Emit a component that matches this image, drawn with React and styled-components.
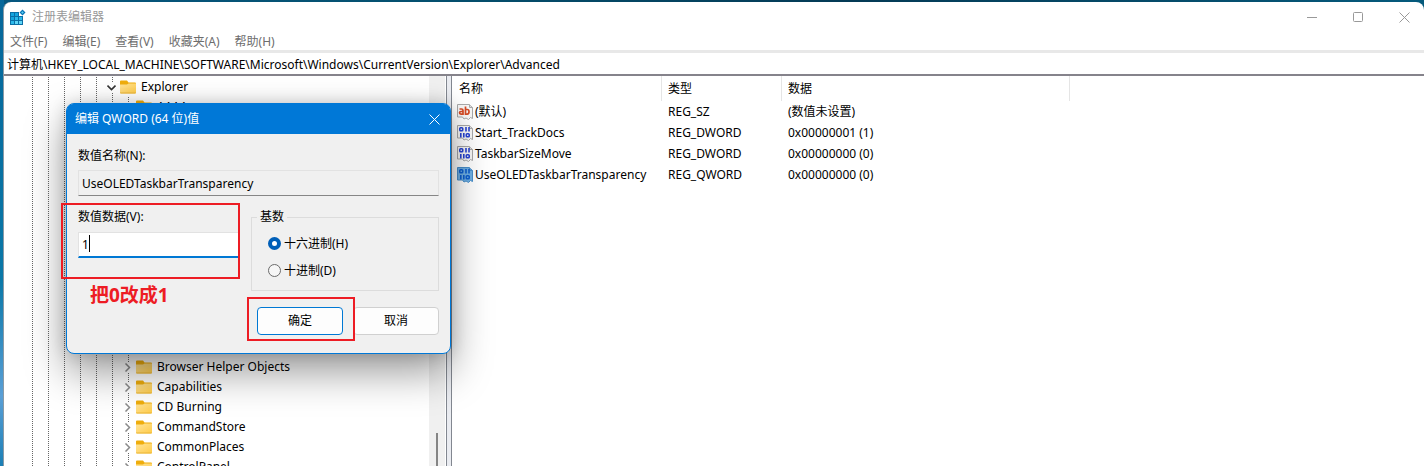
import React from 'react';
import styled, { createGlobalStyle, css } from 'styled-components';

const GlobalStyle = createGlobalStyle`
  * { box-sizing: border-box; }
  html, body { margin: 0; height: 100%; overflow: hidden; }
  body {
    font-family: "Noto Sans", "Noto Sans CJK SC", sans-serif;
    font-size: 12px;
    line-height: 20px;
    color: #000;
  }
  #root { height: 100%; }
  button, input { font: inherit; color: inherit; }
  svg { flex: none; }
`;

const menus = ['文件(F)', '编辑(E)', '查看(V)', '收藏夹(A)', '帮助(H)'];

const subKeys = [
  'Browser Helper Objects',
  'Capabilities',
  'CD Burning',
  'CommandStore',
  'CommonPlaces',
  'ControlPanel',
];

const values = [
  { name: '(默认)', type: 'REG_SZ', data: '(数值未设置)', kind: 'string' },
  { name: 'Start_TrackDocs', type: 'REG_DWORD', data: '0x00000001 (1)', kind: 'binary' },
  { name: 'TaskbarSizeMove', type: 'REG_DWORD', data: '0x00000000 (0)', kind: 'binary' },
  { name: 'UseOLEDTaskbarTransparency', type: 'REG_QWORD', data: '0x00000000 (0)', kind: 'binary', selected: true },
];

const AppIcon = () => (
  <svg width="16" height="16" viewBox="0 0 16 16">
    <path d="M0 3h9v4h4v9H0z" fill="#0b6fa6" />
    <path d="M1 4h3v3H1zM5 4h3v3H5zM1 8h3v3H1z" fill="#16a5df" />
    <path d="M5 8h3v3H5zM9 8h3v3H9zM1 12h3v3H1z" fill="#2cb9ea" />
    <path d="M5 12h3v3H5zM9 12h3v3H9z" fill="#5fd5f6" />
    <path d="M12.500 0.500 15.500 3.500 12.500 6.500 9.500 3.500z" fill="#0a75b5" />
    <path d="M12.500 2.200 13.800 3.500 12.500 4.800 11.200 3.500z" fill="#59d0f5" />
  </svg>
);

const FolderIcon = () => (
  <svg width="16" height="14" viewBox="0 0 16 14">
    <defs>
      <linearGradient id="folder" x1="0" y1="0" x2="1" y2="1">
        <stop offset="0" stopColor="#ffe49a" />
        <stop offset="1" stopColor="#ffcb47" />
      </linearGradient>
    </defs>
    <path d="M0 1.500Q0 0.500 1 0.500h6L8.500 2.500H15q1 0 1 1V6H0z" fill="#efad0c" />
    <path d="M0 4.500h7L8.500 3.500H16V12.500q0 1-1 1H1q-1 0-1-1z" fill="url(#folder)" />
    <path d="M0 12.500h16q0 1-1 1H1q-1 0-1-1z" fill="#e9b53a" />
  </svg>
);

const Chevron = ({ open }) => (
  <svg width="9" height="9" viewBox="0 0 9 9" fill="none">
    {open
      ? <path d="M0.500 2.500 4.500 6.500 8.500 2.500" stroke="#333" strokeWidth="1.600" />
      : <path d="M2.500 0.500 6.500 4.500 2.500 8.500" stroke="#8a8a8a" strokeWidth="1.500" />}
  </svg>
);

const ValueIcon = ({ kind, selected }) => (
  <svg width="16" height="16" viewBox="0 0 16 16">
    <path
      d="M0.500 0.500h11.500l3.500 3v11l-2-1-2 2-2.500-1.500-2 1-1.500-2H0.500z"
      fill={selected ? '#6fb1e6' : '#f8f8f8'}
      stroke={selected ? '#4a90cc' : '#a9a9a9'}
    />
    <path d="M12.500 0.500v3h3" fill="none" stroke={selected ? '#4a90cc' : '#a9a9a9'} />
    {kind === 'string' ? (
      <g fill="none" stroke="#d64a24" strokeWidth="1.700">
        <path d="M2.500 5h2q1.500 0 1.500 1.500V11M6 7.500H4Q2.500 7.500 2.500 8.800T4 10.100h2" />
        <path d="M8.500 2.500V11M8.500 5.500h1.800q1.700 0 1.700 2.300t-1.700 2.300H8.500" />
      </g>
    ) : (
      <g fill="none" stroke={selected ? '#0d5fd0' : '#2743d4'} strokeWidth="1.600">
        <rect x="2.800" y="2.800" width="2.900" height="2.900" rx="0.800" />
        <path d="M9 2v4.500M12 2v4.500M3.800 8v4.500M6.800 8v4.500" />
        <rect x="9.300" y="8.800" width="2.900" height="2.900" rx="0.800" />
      </g>
    )}
  </svg>
);

const CloseGlyph = () => (
  <svg width="11" height="11" viewBox="0 0 11 11" fill="none" stroke="currentColor">
    <path d="M0.500 0.500 10.500 10.500M10.500 0.500 0.500 10.500" />
  </svg>
);

const TreeRow = ({ name, open, level }) => (
  <TreeItem $level={level}>
    <Chevron open={open} />
    <FolderIcon />
    <span>{name}</span>
  </TreeItem>
);

const EditDialog = () => {
  const [value, setValue] = React.useState('1');
  const [base, setBase] = React.useState('hex');

  return (
    <Dialog role="dialog" aria-labelledby="dialog-title">
      <DialogTitle>
        <span id="dialog-title">编辑 QWORD (64 位)值</span>
        <DialogClose aria-label="关闭"><CloseGlyph /></DialogClose>
      </DialogTitle>
      <DialogBody>
        <Field>
          <label htmlFor="value-name">数值名称(N):</label>
          <NameInput id="value-name" readOnly value="UseOLEDTaskbarTransparency" />
        </Field>
        <Columns>
          <Field>
            <label htmlFor="value-data">数值数据(V):</label>
            <DataBox>
              <DataInput id="value-data" value={value} onChange={(e) => setValue(e.target.value)} />
              <Caret />
            </DataBox>
          </Field>
          <BaseGroup>
            <legend>基数</legend>
            <RadioLabel>
              <Radio name="base" checked={base === 'hex'} onChange={() => setBase('hex')} />
              十六进制(H)
            </RadioLabel>
            <RadioLabel>
              <Radio name="base" checked={base === 'dec'} onChange={() => setBase('dec')} />
              十进制(D)
            </RadioLabel>
          </BaseGroup>
        </Columns>
        <Actions>
          <PushButton $primary>确定</PushButton>
          <PushButton>取消</PushButton>
        </Actions>
      </DialogBody>
      <Mark $left={-6} $top={99} $width={179} $height={76} />
      <Mark $left={180} $top={193} $width={108} $height={44} />
      <Note>把0改成1</Note>
    </Dialog>
  );
};

const App = () => (
  <Desktop>
    <GlobalStyle />
    <Window>
      <TitleBar>
        <AppIcon />
        <Title>注册表编辑器</Title>
        <WindowButton aria-label="最小化">
          <svg width="11" height="11" stroke="currentColor"><path d="M0 5.500h10" /></svg>
        </WindowButton>
        <WindowButton aria-label="最大化">
          <svg width="11" height="11" stroke="currentColor" fill="none">
            <rect x="0.500" y="0.500" width="9" height="9" rx="1" />
          </svg>
        </WindowButton>
        <WindowButton aria-label="关闭"><CloseGlyph /></WindowButton>
      </TitleBar>
      <MenuBar>
        {menus.map((menu) => <MenuButton key={menu}>{menu}</MenuButton>)}
      </MenuBar>
      <AddressInput
        aria-label="地址"
        defaultValue="计算机\HKEY_LOCAL_MACHINE\SOFTWARE\Microsoft\Windows\CurrentVersion\Explorer\Advanced"
      />
      <Panes>
        <TreePane>
          <Guides>
            {[0, 1, 2, 3, 4, 5, 6].map((i) => <Guide key={i} $short={i === 6} />)}
          </Guides>
          <Tree>
            <TreeRow name="Explorer" open level={0} />
            <TreeRow name="AAAA" level={1} />
            <SubKeys>
              {subKeys.map((name) => <TreeRow key={name} name={name} level={1} />)}
            </SubKeys>
          </Tree>
          <ScrollTrack><ScrollThumb /></ScrollTrack>
        </TreePane>
        <Splitter />
        <ListPane>
          <ValueTable>
            <thead>
              <tr>
                <HeadCell $width={210}>名称</HeadCell>
                <HeadCell $width={120}>类型</HeadCell>
                <HeadCell $width={288}>数据</HeadCell>
              </tr>
            </thead>
            <tbody>
              {values.map((item) => (
                <tr key={item.name}>
                  <Cell>
                    <ValueName>
                      <ValueIcon kind={item.kind} selected={item.selected} />
                      {item.name}
                    </ValueName>
                  </Cell>
                  <Cell>{item.type}</Cell>
                  <Cell>{item.data}</Cell>
                </tr>
              ))}
            </tbody>
          </ValueTable>
        </ListPane>
      </Panes>
    </Window>
    <EditDialog />
  </Desktop>
);

const Desktop = styled.div`
  position: relative;
  display: flex;
  height: 100%;
  padding: 2px 0 0 3px;
  background:
    linear-gradient(#06679a, #0a78a8 60%, #5a9fd6 85%, #1b7fb5) 0 0 / 4px 100% no-repeat,
    linear-gradient(90deg, #06577f 0, #04506f 30%, #043a55 60%, #055a7c 100%);
`;

const Window = styled.div`
  flex: 1;
  min-width: 0;
  display: flex;
  flex-direction: column;
  border-left: 1px solid #8a9aa5;
  border-radius: 8px 8px 0 0;
  background: #fff;
  overflow: hidden;
`;

const TitleBar = styled.header`
  display: flex;
  align-items: center;
  height: 30px;
  padding-left: 6px;
  color: #999;
`;

const Title = styled.span`
  flex: 1;
  padding-left: 6px;
`;

const WindowButton = styled.button`
  width: 46px;
  height: 28px;
  padding: 0;
  border: none;
  background: transparent;
  display: grid;
  place-items: center;

  &:last-child {
    width: 43px;
    padding-left: 3px;
  }
`;

const MenuBar = styled.nav`
  display: flex;
  gap: 15px;
  height: 18px;
  padding-left: 6px;
`;

const MenuButton = styled.button`
  padding: 0;
  border: none;
  background: transparent;
  color: #6d6d6d;
  line-height: 20px;
`;

const AddressInput = styled.input`
  height: 26px;
  flex: none;
  padding: 0 3px;
  border: solid #e8e8e8;
  border-width: 3px 0 2px;
  border-bottom-color: #85838b;
  outline: none;
  background: #fff;
`;

const Panes = styled.div`
  flex: 1;
  min-height: 0;
  display: flex;
`;

const TreePane = styled.div`
  position: relative;
  flex: none;
  width: 442px;
  display: flex;
  padding-right: 1px;
  overflow: hidden;
`;

const Guides = styled.div`
  position: absolute;
  inset: 1px auto 0 28px;
  display: flex;
  gap: 15px;
`;

const Guide = styled.div`
  width: 1px;
  margin-top: ${(p) => (p.$short ? 20 : 0)}px;
  background: repeating-linear-gradient(#666 0 1px, transparent 1px 2px);
`;

const Tree = styled.div`
  flex: 1;
  position: relative;
  padding-top: 1px;
`;

const SubKeys = styled.div`
  padding-top: 240px;
`;

const TreeItem = styled.div`
  display: flex;
  align-items: center;
  height: 20px;
  padding-left: ${(p) => 103 + p.$level * 16}px;
  white-space: nowrap;

  svg:first-child {
    background: #fff;
    margin-right: 4px;
  }
  span { padding-left: 5px; }
`;

const ScrollTrack = styled.div`
  width: 16px;
  display: flex;
  justify-content: center;
  align-items: flex-end;
  background: #f0f0f0;
`;

const ScrollThumb = styled.div`
  width: 2px;
  height: 33px;
  background: #858585;
`;

const Splitter = styled.div`
  width: 6px;
  border: solid #828790;
  border-width: 0 1px;
  background: #eaecf1;
`;

const ListPane = styled.div`
  flex: 1;
  min-width: 0;
`;

const ValueTable = styled.table`
  table-layout: fixed;
  width: 618px;
  border-collapse: separate;
  border-spacing: 0;
`;

const HeadCell = styled.th`
  width: ${(p) => p.$width}px;
  height: 25px;
  padding: 0 6px;
  border-right: 1px solid #e5e5e5;
  font-weight: 400;
  text-align: left;

  &:first-child { padding-left: 7px; }
`;

const Cell = styled.td`
  height: 21px;
  padding: 0 0 0 6px;
  white-space: nowrap;

  &:first-child { padding-left: 5px; }
`;

const ValueName = styled.span`
  display: flex;
  align-items: center;
  gap: 2px;
`;

const Dialog = styled.section`
  position: absolute;
  left: 66px;
  top: 103px;
  width: 385px;
  border: 1px solid #0078d7;
  border-radius: 8px;
  background: #f0f0f0;
  box-shadow: 0 18px 40px rgba(0, 0, 0, 0.4), 0 0 16px rgba(0, 0, 0, 0.16);
`;

const DialogTitle = styled.header`
  display: flex;
  align-items: center;
  justify-content: space-between;
  height: 30px;
  padding-left: 8px;
  border-radius: 6px 6px 0 0;
  background: #0078d7;
  color: #fff;
`;

const DialogClose = styled.button`
  width: 31px;
  height: 28px;
  padding: 0;
  border: none;
  background: transparent;
  display: grid;
  place-items: center;
`;

const DialogBody = styled.div`
  padding: 12px 11px 18px;
`;

const Field = styled.div`
  display: flex;
  flex-direction: column;
  gap: 4px;
`;

const boxStyle = css`
  width: 100%;
  height: 26px;
  padding: 0 3px;
  border: 1px solid #e2e2e2;
  outline: none;
`;

const NameInput = styled.input`
  ${boxStyle}
  border-bottom-color: #868686;
  background: #f0f0f0;
`;

const Columns = styled.div`
  display: grid;
  grid-template-columns: 161px 1fr;
  gap: 12px;
  padding-top: 11px;
`;

const DataBox = styled.div`
  position: relative;
  display: flex;
  padding-top: 1px;
`;

const DataInput = styled.input`
  ${boxStyle}
  border-bottom: 2px solid #0078d4;
  background: #fff;
`;

const Caret = styled.i`
  position: absolute;
  left: 11px;
  top: 4px;
  width: 1px;
  height: 17px;
  background: #000;
`;

const BaseGroup = styled.fieldset`
  margin: 0;
  padding: 3px 16px 6px;
  border: 1px solid #dcdcdc;

  legend {
    margin-left: -11px;
    padding: 0 3px;
  }
`;

const RadioLabel = styled.label`
  display: flex;
  align-items: center;
  gap: 3px;
  height: 27px;
`;

const Radio = styled.input.attrs({ type: 'radio' })`
  appearance: none;
  width: 13px;
  height: 13px;
  margin: 0;
  border: 1px solid #6b6b6b;
  border-radius: 50%;
  background: #f6f6f6;

  &:checked {
    border: 4px solid #005fb8;
    background: #fff;
  }
`;

const Actions = styled.div`
  display: flex;
  justify-content: flex-end;
  gap: 10px;
  padding-top: 16px;
`;

const PushButton = styled.button`
  width: 86px;
  height: 28px;
  padding: 0;
  border: 1px solid ${(p) => (p.$primary ? '#0078d4' : '#d0d0d0')};
  border-radius: 4px;
  background: #fdfdfd;
`;

const Mark = styled.div`
  position: absolute;
  left: ${(p) => p.$left}px;
  top: ${(p) => p.$top}px;
  width: ${(p) => p.$width}px;
  height: ${(p) => p.$height}px;
  border: 2px solid #ed1c24;
  pointer-events: none;
`;

const Note = styled.strong`
  position: absolute;
  left: 23px;
  top: 179px;
  font-size: 19px;
  line-height: 24px;
  color: #ed1c24;
`;

export default App;
